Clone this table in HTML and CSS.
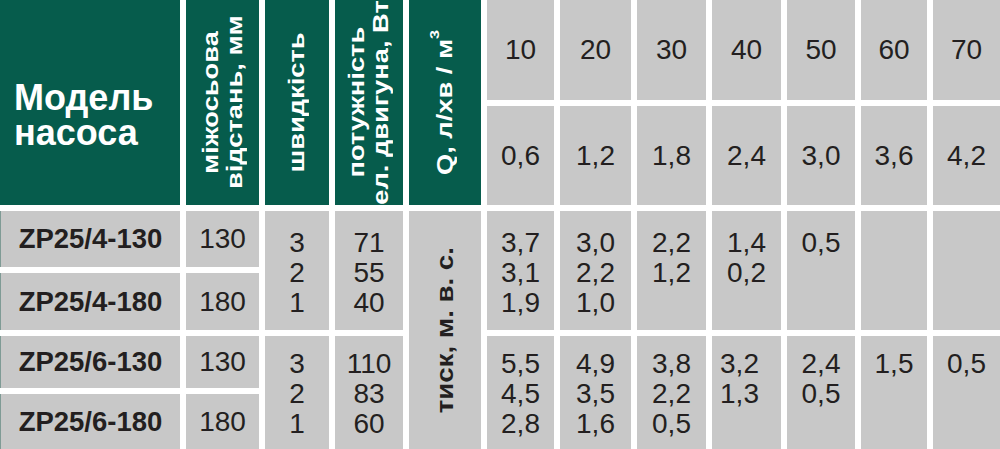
FILE: index.html
```html
<!DOCTYPE html>
<html lang="uk">
<head>
<meta charset="utf-8">
<title>Модель насоса</title>
<link rel="stylesheet" href="styles.css">
</head>
<body>
<div class="table">
  <div class="cell head model r2"><div class="mline">Модель</div><div class="mline">насоса</div></div>
  <div class="cell head r2"><span class="vt">міжосьова<br>відстань, мм</span></div>
  <div class="cell head r2"><span class="vt">швидкість</span></div>
  <div class="cell head r2"><span class="vt">потужність<br>ел. двигуна, Вт</span></div>
  <div class="cell head r2"><span class="vt">Q, л/хв / м<sup class="sup">3</sup></span></div>

  <div class="cell num">10</div>
  <div class="cell num">20</div>
  <div class="cell num">30</div>
  <div class="cell num">40</div>
  <div class="cell num">50</div>
  <div class="cell num">60</div>
  <div class="cell num">70</div>

  <div class="cell num">0,6</div>
  <div class="cell num">1,2</div>
  <div class="cell num">1,8</div>
  <div class="cell num">2,4</div>
  <div class="cell num">3,0</div>
  <div class="cell num">3,6</div>
  <div class="cell num">4,2</div>

  <div class="cell name">ZP25/4-130</div>
  <div class="cell num">130</div>
  <div class="cell list r2 g1">3<br>2<br>1</div>
  <div class="cell list r2 g1">71<br>55<br>40</div>
  <div class="cell gray r4"><span class="vt dark">тиск, м. в. с.</span></div>
  <div class="cell list r2 g1">3,7<br>3,1<br>1,9</div>
  <div class="cell list r2 g1">3,0<br>2,2<br>1,0</div>
  <div class="cell list r2 g1">2,2<br>1,2</div>
  <div class="cell list r2 g1">1,4<br>0,2</div>
  <div class="cell list r2 g1">0,5</div>
  <div class="cell list r2 g1"></div>
  <div class="cell list r2 g1"></div>

  <div class="cell name">ZP25/4-180</div>
  <div class="cell num">180</div>

  <div class="cell name">ZP25/6-130</div>
  <div class="cell num">130</div>
  <div class="cell list r2 g2">3<br>2<br>1</div>
  <div class="cell list r2 g2">110<br>83<br>60</div>
  <div class="cell list r2 g2">5,5<br>4,5<br>2,8</div>
  <div class="cell list r2 g2">4,9<br>3,5<br>1,6</div>
  <div class="cell list r2 g2">3,8<br>2,2<br>0,5</div>
  <div class="cell list r2 g2 shift">3,2<br>1,3</div>
  <div class="cell list r2 g2">2,4<br>0,5</div>
  <div class="cell list r2 g2">1,5</div>
  <div class="cell list r2 g2">0,5</div>

  <div class="cell name">ZP25/6-180</div>
  <div class="cell num">180</div>
</div>
</body>
</html>
```

FILE: styles.css
```css
html, body {
  margin: 0;
  padding: 0;
  background: #ffffff;
}

body {
  font-family: "Liberation Sans", Arial, sans-serif;
  color: #231f20;
}

.table {
  display: grid;
  width: 1000px;
  height: 449px;
  grid-template-columns: 180px 73px 64px 68px 72px 67px 71px 69px 69px 68px 66px 67px;
  grid-template-rows: 100px 99px 56px 57px 52px 55px;
  gap: 6px;
  overflow: hidden;
}

.cell {
  background: #c8c8c8;
  box-sizing: border-box;
}

.r2 { grid-row: span 2; }
.r4 { grid-row: span 4; }

.head {
  background: #065c4c;
  color: #ffffff;
  display: flex;
  align-items: center;
  justify-content: center;
}

.model {
  display: flex;
  flex-direction: column;
  align-items: flex-start;
  justify-content: flex-start;
  gap: 3px;
  font-weight: bold;
  font-size: 36px;
  padding: 82px 0 0 14px;
}

.mline {
  line-height: 32px;
  height: 32px;
}

.vt {
  writing-mode: vertical-rl;
  transform: rotate(180deg) scaleY(1.24);
  font-weight: bold;
  font-size: 22px;
  line-height: 24px;
  text-align: center;
  white-space: nowrap;
}

.dark {
  color: #231f20;
  font-size: 24px;
  transform: rotate(180deg) scaleY(1.15);
}

.sup {
  font-size: 13px;
  line-height: 0;
  vertical-align: 10px;
}

.gray {
  display: flex;
  align-items: center;
  justify-content: center;
}

.num {
  display: flex;
  align-items: center;
  justify-content: center;
  font-size: 28px;
}

.name {
  display: flex;
  align-items: center;
  justify-content: center;
  font-weight: bold;
  font-size: 27.5px;
  border-left: 1px solid #7f9b95;
}

.list {
  font-size: 28px;
  line-height: 30px;
  text-align: center;
}

.shift {
  padding-right: 14px;
}

.g1 { padding-top: 17px; }
.g2 { padding-top: 13px; }
```
